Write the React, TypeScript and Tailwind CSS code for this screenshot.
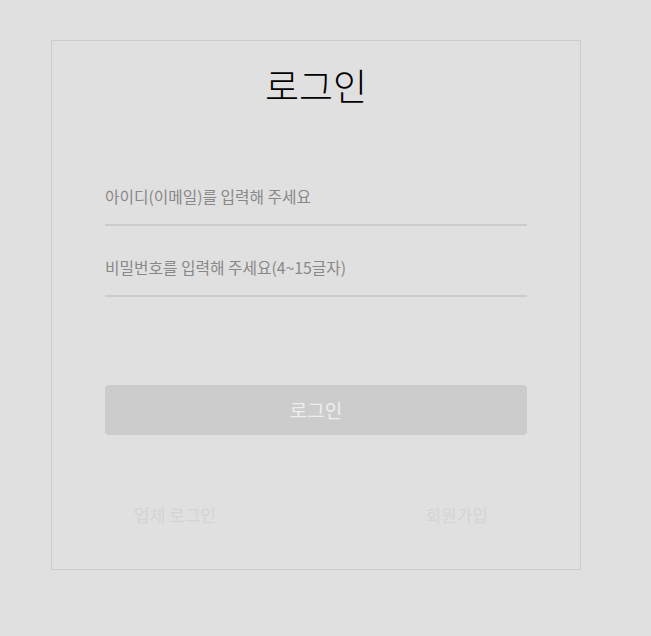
export default function App() {
  return (
    <div
      className="min-h-[636px] w-full bg-[#e0e0e0] pt-[40px] pl-[51px]"
      style={{ fontFamily: '"Noto Sans CJK KR", "Noto Sans", sans-serif' }}
    >
      <div className="flex h-[530px] w-[530px] flex-col border border-[#cccccc] pl-[53px] pr-[53px] pt-[19px]">
        <h1 className="h-[50px] text-center text-[37px] leading-[50px] font-light text-black">로그인</h1>
        <input
          className="mt-[66px] h-[50px] w-full border-b-2 border-[#cccccc] bg-transparent pb-[7px] text-[15.75px] text-[#333] outline-none placeholder:text-[#888888]"
          placeholder="아이디(이메일)를 입력해 주세요"
        />
        <input
          type="password"
          className="mt-[21px] h-[50px] w-full border-b-2 border-[#cccccc] bg-transparent pb-[7px] text-[15.75px] text-[#333] outline-none placeholder:text-[#888888]"
          placeholder="비밀번호를 입력해 주세요(4~15글자)"
        />
        <button className="mt-[88px] h-[50px] w-full rounded-[4px] bg-[#cccccc] text-[19px] text-[#eeeeee]">
          로그인
        </button>
        <div className="mt-[68px] flex h-[24px] items-center justify-between pl-[29px] pr-[39px] text-[17px] leading-[24px] text-[#d4d4d4]">
          <span>업체 로그인</span>
          <span>회원가입</span>
        </div>
      </div>
    </div>
  );
}
